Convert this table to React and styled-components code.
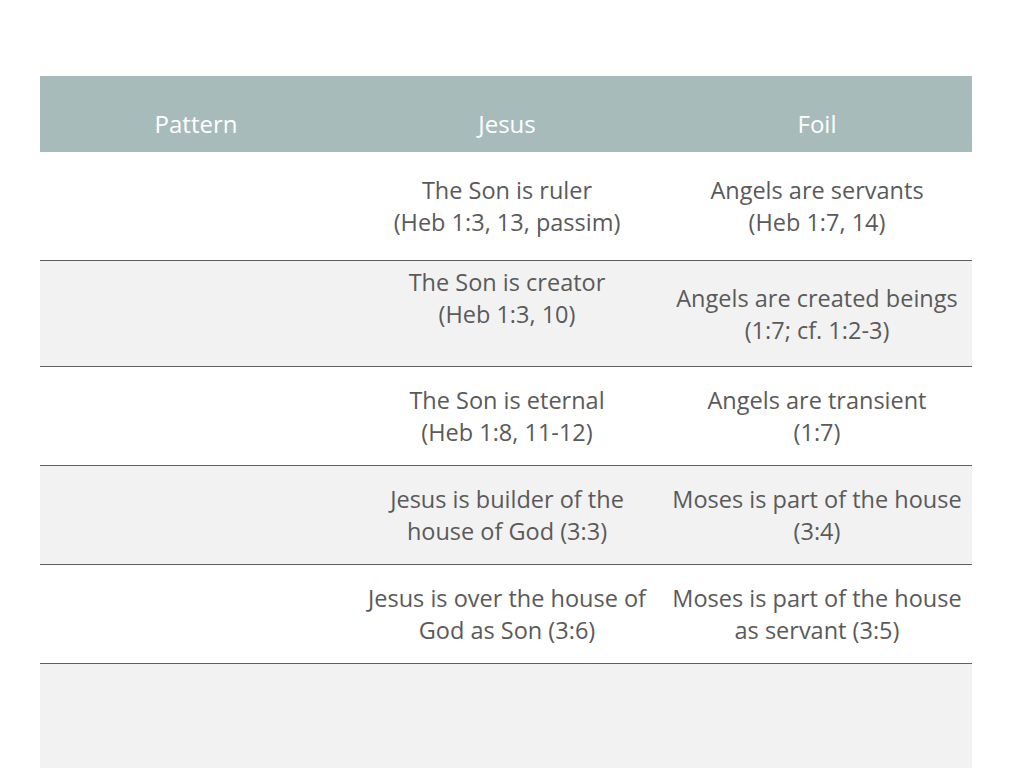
import React from 'react'
import styled, { createGlobalStyle } from 'styled-components'

const GlobalStyle = createGlobalStyle`
  html, body {
    margin: 0;
    padding: 0;
    background: #ffffff;
  }
  body {
    font-family: 'Open Sans', 'Noto Sans', sans-serif;
    overflow: hidden;
  }
`

const rows = [
  { h: 108, jesus: ['The Son is ruler', '(Heb 1:3, 13, passim)'], foil: ['Angels are servants', '(Heb 1:7, 14)'] },
  { h: 106, jesus: ['The Son is creator', '(Heb 1:3, 10)', ''], foil: ['Angels are created beings', '(1:7; cf. 1:2-3)'] },
  { h: 99, jesus: ['The Son is eternal', '(Heb 1:8, 11-12)'], foil: ['Angels are transient', '(1:7)'] },
  { h: 99, jesus: ['Jesus is builder of the', 'house of God (3:3)'], foil: ['Moses is part of the house', '(3:4)'] },
  { h: 99, jesus: ['Jesus is over the house of', 'God as Son (3:6)'], foil: ['Moses is part of the house', 'as servant (3:5)'] },
  { h: 110, jesus: [], foil: [] },
]

const Slide = styled.div`
  width: 1024px;
  height: 768px;
  padding: 76px 52px 0 40px;
  box-sizing: border-box;
`

const Table = styled.div`
  width: 932px;
  display: flex;
  flex-direction: column;
`

const HeadRow = styled.div`
  display: grid;
  grid-template-columns: 312px 310px 310px;
  height: 76px;
  background: #a7bbbb;
`

const HeadCell = styled.div`
  display: flex;
  align-items: flex-end;
  justify-content: center;
  padding-bottom: 12px;
  color: #ffffff;
  font-size: 24px;
  font-weight: 400;
`

const Row = styled.div`
  display: grid;
  grid-template-columns: 312px 310px 310px;
  height: ${p => p.$h}px;
  background: ${p => (p.$shaded ? '#f2f2f2' : '#ffffff')};
  border-top: ${p => (p.$first ? 'none' : '1px solid #606060')};
  box-sizing: border-box;
`

const Cell = styled.div`
  display: flex;
  flex-direction: column;
  align-items: center;
  justify-content: center;
  text-align: center;
  color: #5a5a5a;
  font-size: 23.5px;
  line-height: 32px;
  white-space: nowrap;
`

const Line = styled.span`
  display: block;
  min-height: 32px;
`

const Lines = ({ items }) => items.map((t, i) => <Line key={i}>{t}</Line>)

export default function App() {
  return (
    <>
      <GlobalStyle />
      <Slide>
        <Table>
          <HeadRow>
            <HeadCell>Pattern</HeadCell>
            <HeadCell>Jesus</HeadCell>
            <HeadCell>Foil</HeadCell>
          </HeadRow>
          {rows.map((r, i) => (
            <Row key={i} $h={r.h} $shaded={i % 2 === 1} $first={i === 0}>
              <Cell />
              <Cell><Lines items={r.jesus} /></Cell>
              <Cell><Lines items={r.foil} /></Cell>
            </Row>
          ))}
        </Table>
      </Slide>
    </>
  )
}
